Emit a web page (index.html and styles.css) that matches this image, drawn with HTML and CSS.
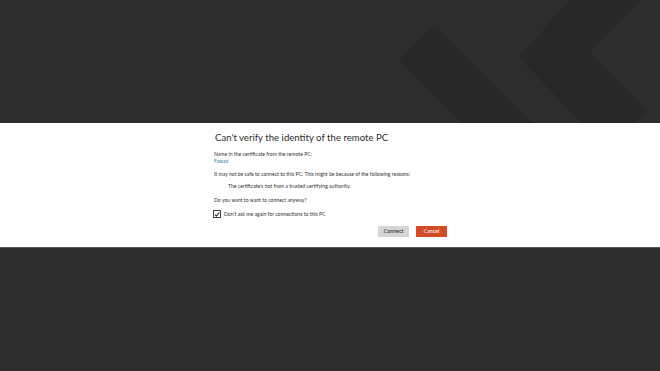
FILE: index.html
```html
<!DOCTYPE html>
<html>
<head>
<meta charset="utf-8">
<link rel="stylesheet" href="styles.css">
</head>
<body>
<div class="top">
  <svg class="bgart" width="660" height="123" viewBox="0 0 660 123">
    <polygon points="435,24 399,60 468,129 540,129" fill="#282828"/>
    <polygon points="570,0 642,0 590,52 648,110 630,129 588,129 518,57" fill="#282828"/>
  </svg>
</div>
<div class="dialog">
  <div class="inner">
    <h1 class="title">Can't verify the identity of the remote PC</h1>
    <p class="line l-name">Name in the certificate from the remote PC:</p>
    <p class="line link">Fawad</p>
    <p class="line l-safe">It may not be safe to connect to this PC. This might be because of the following reasons:</p>
    <p class="line reason">The certificate's not from a trusted certifying authority.</p>
    <p class="line l-ask">Do you want to want to connect anyway?</p>
    <label class="check">
      <span class="box"><svg width="7" height="7" viewBox="0 0 7 7"><path d="M1.2 3.6 L2.8 5.3 L6.2 1.2" fill="none" stroke="#111" stroke-width="1.2"/></svg></span>
      <span>Don't ask me again for connections to this PC</span>
    </label>
    <div class="buttons">
      <button class="btn connect">Connect</button>
      <button class="btn cancel">Cancel</button>
    </div>
  </div>
</div>
<div class="bottom"></div>
</body>
</html>
```

FILE: styles.css
```css
html, body {
  margin: 0;
  padding: 0;
  background: #2d2d2d;
  width: 660px;
  height: 371px;
  overflow: hidden;
  font-family: "Lato", "Noto Sans", sans-serif;
}
.top {
  height: 123px;
  background: #2d2d2d;
  overflow: hidden;
}
.bgart {
  display: block;
}
.dialog {
  background: #ffffff;
  height: 125px;
  border-bottom: 1px solid #5c5c5c;
  box-sizing: border-box;
}
.inner {
  width: 234px;
  margin: 0 auto;
  padding-top: 8px;
  display: flex;
  flex-direction: column;
  color: #333333;
}
.title {
  margin: 0 0 0 2px;
  font-weight: 400;
  font-size: 9.6px;
  line-height: 13px;
  color: #2e2e2e;
}
.line {
  margin: 0 0 0 1px;
  font-size: 5.1px;
  line-height: 7px;
}
.l-name { margin-top: 7px; }
.link { color: #2b8ba8; }
.l-safe { margin-top: 6px; }
.reason { margin-top: 5px; padding-left: 14px; }
.l-ask { margin-top: 7px; }
.check {
  display: flex;
  align-items: center;
  gap: 3px;
  margin-top: 6px;
  font-size: 5.1px;
  line-height: 7px;
}
.box {
  width: 6px;
  height: 6px;
  border: 0.6px solid #444;
  display: flex;
  align-items: center;
  justify-content: center;
  overflow: visible;
}
.box svg { display: block; }
.buttons {
  display: flex;
  justify-content: flex-end;
  gap: 7px;
  margin-top: 8px;
}
.btn {
  width: 31px;
  height: 11px;
  border: none;
  padding: 0;
  margin: 0;
  font-family: "Lato", "Noto Sans", sans-serif;
  font-size: 5.3px;
  line-height: 11px;
}
.connect {
  background: #d5d5d5;
  color: #222;
}
.cancel {
  background: #d24b24;
  color: #ffffff;
}
.bottom {
  height: 123px;
}
```
